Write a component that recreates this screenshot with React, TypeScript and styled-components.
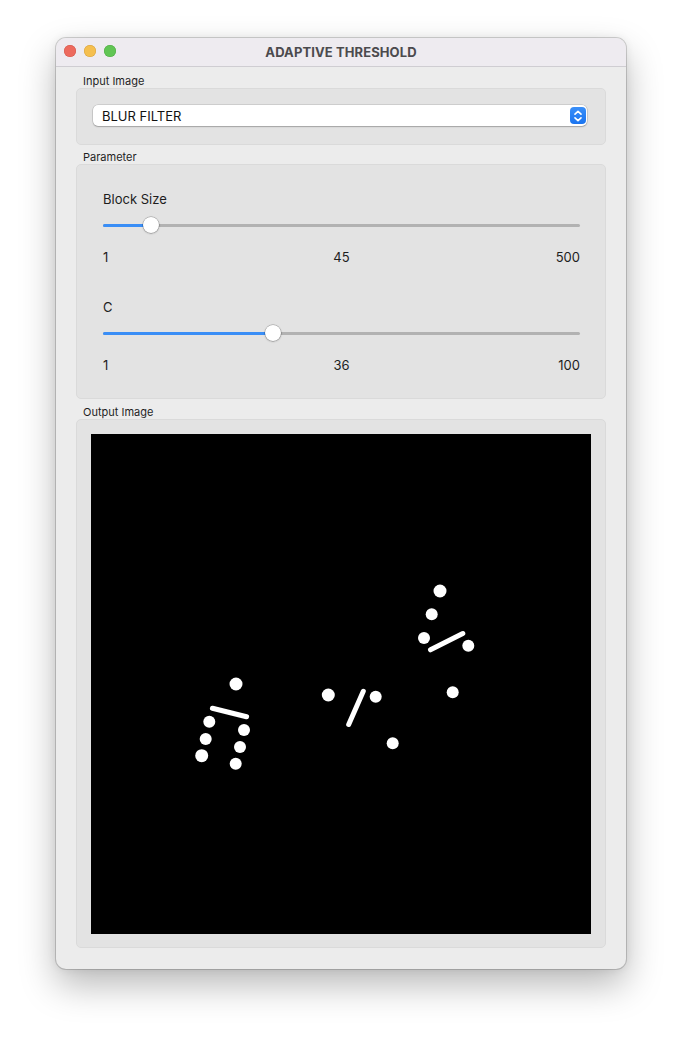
import React from 'react';
import styled, { createGlobalStyle } from 'styled-components';

const GlobalStyle = createGlobalStyle`
  html, body {
    margin: 0;
    padding: 0;
    background: #ffffff;
  }
  body {
    font-family: 'Inter', 'Helvetica Neue', 'Liberation Sans', sans-serif;
    color: #1d1d1d;
  }
`;

const Page = styled.div`
  padding: 38px 56px 75px;
`;

const Window = styled.div`
  width: 570px;
  background: #ececec;
  border-radius: 10px;
  overflow: hidden;
  box-shadow: 0 0 0 1px rgba(0, 0, 0, 0.16), 0 16px 36px rgba(0, 0, 0, 0.28), 0 0 10px rgba(0, 0, 0, 0.08);
`;

const TitleBar = styled.div`
  position: relative;
  height: 28px;
  display: flex;
  align-items: center;
  justify-content: center;
  background: #eeebf0;
  border-bottom: 1px solid #cfcdd2;
`;

const Lights = styled.div`
  position: absolute;
  left: 8px;
  top: 7px;
  display: flex;
  gap: 8px;
`;

const Light = styled.span<{ $color: string; $edge: string }>`
  width: 12px;
  height: 12px;
  border-radius: 50%;
  background: ${(p) => p.$color};
  box-shadow: inset 0 0 0 0.5px ${(p) => p.$edge};
`;

const Title = styled.div`
  font-size: 13px;
  font-weight: 700;
  color: #4b4a4d;
  letter-spacing: 0.1px;
`;

const Content = styled.div`
  padding: 8px 20px 21px;
  display: flex;
  flex-direction: column;
`;

const Section = styled.section<{ $gap?: number }>`
  display: flex;
  flex-direction: column;
  margin-top: ${(p) => p.$gap ?? 0}px;
`;

const GroupLabel = styled.div`
  font-size: 11px;
  line-height: 13px;
  padding-left: 7px;
  color: #1f1f1f;
`;

const GroupBox = styled.div<{ $pad: string }>`
  background: #e3e3e3;
  border: 1px solid #dadada;
  border-radius: 5px;
  padding: ${(p) => p.$pad};
`;

const Select = styled.div`
  height: 21px;
  background: #ffffff;
  border-radius: 5px;
  display: flex;
  align-items: center;
  justify-content: space-between;
  padding: 0 1px 0 9px;
  box-shadow: 0 0 0 0.5px rgba(0, 0, 0, 0.18), 0 1px 1.5px rgba(0, 0, 0, 0.22);
  font-size: 13px;
  color: #111;
`;

const Stepper = styled.div`
  width: 16px;
  height: 17px;
  border-radius: 4px;
  background: linear-gradient(#3a8ff8, #1a74f0);
  display: flex;
  align-items: center;
  justify-content: center;
`;

const ParamGroup = styled.div`
  display: flex;
  flex-direction: column;
  & + & {
    margin-top: 34px;
  }
`;

const ParamName = styled.div`
  font-size: 13px;
  line-height: 16px;
`;

const SliderWrap = styled.div`
  position: relative;
  height: 16px;
  margin-top: 10px;
  display: flex;
  align-items: center;
`;

const Track = styled.div`
  flex: 1;
  height: 3px;
  border-radius: 2px;
  background: #b2b2b2;
  overflow: hidden;
`;

const Fill = styled.div`
  height: 100%;
  background: #3a8ef6;
`;

const Thumb = styled.div`
  position: absolute;
  top: 0;
  width: 16px;
  height: 16px;
  margin-left: -8px;
  border-radius: 50%;
  background: #ffffff;
  box-shadow: 0 0 0 0.5px rgba(0, 0, 0, 0.28), 0 0.5px 2px rgba(0, 0, 0, 0.3);
`;

const Ticks = styled.div`
  display: grid;
  grid-template-columns: 1fr auto 1fr;
  margin-top: 16px;
  font-size: 13px;
  line-height: 16px;
  & > :nth-child(2) {
    text-align: center;
  }
  & > :nth-child(3) {
    text-align: right;
  }
`;

const Output = styled.svg`
  display: block;
`;

type Param = { name: string; min: number; max: number; value: number };

const params: Param[] = [
  { name: 'Block Size', min: 1, max: 500, value: 45 },
  { name: 'C', min: 1, max: 100, value: 36 },
];

const TRACK = 476;
const THUMB = 15;

const Slider = ({ min, max, value }: Param) => {
  const frac = (value - min) / (max - min);
  const x = THUMB / 2 + frac * (TRACK - THUMB);
  return (
    <SliderWrap>
      <Track>
        <Fill style={{ width: x }} />
      </Track>
      <Thumb style={{ left: x }} />
    </SliderWrap>
  );
};

const dots: [number, number, number][] = [
  [349, 157, 6.5],
  [340.7, 180.3, 6],
  [333, 204, 6],
  [377.3, 211.7, 6],
  [361.7, 258.3, 6],
  [284.7, 262.7, 6],
  [237.3, 261, 6.5],
  [301.7, 309.3, 6],
  [145, 250, 6.5],
  [118.3, 287.7, 6],
  [153, 296, 6],
  [114.7, 305, 6],
  [149, 313, 6],
  [110.7, 321.7, 6.5],
  [144.7, 329.7, 6],
];

const bars: [number, number, number, number][] = [
  [339.5, 215.8, 371.8, 199.5],
  [272.3, 257.3, 257.7, 290.4],
  [121.4, 274.3, 155.6, 282.7],
];

const ThresholdImage = () => (
  <Output width={500} height={500} viewBox="0 0 500 500">
    <rect width={500} height={500} fill="#000" />
    {dots.map(([cx, cy, r], i) => (
      <circle key={i} cx={cx} cy={cy} r={r} fill="#fff" />
    ))}
    {bars.map(([x1, y1, x2, y2], i) => (
      <line key={i} x1={x1} y1={y1} x2={x2} y2={y2} stroke="#fff" strokeWidth={5} strokeLinecap="round" />
    ))}
  </Output>
);

export default function App() {
  return (
    <>
      <GlobalStyle />
      <Page>
        <Window>
          <TitleBar>
            <Lights>
              <Light $color="#ed6a5e" $edge="#d2564b" />
              <Light $color="#f5bf4f" $edge="#d6a13d" />
              <Light $color="#61c554" $edge="#4ea944" />
            </Lights>
            <Title>ADAPTIVE THRESHOLD</Title>
          </TitleBar>
          <Content>
            <Section>
              <GroupLabel>Input Image</GroupLabel>
              <GroupBox $pad="16px 18px 18px 16px">
                <Select>
                  <span>BLUR FILTER</span>
                  <Stepper>
                    <svg width="8" height="12" viewBox="0 0 8 12" fill="none" stroke="#fff" strokeWidth="1.6" strokeLinecap="round" strokeLinejoin="round">
                      <path d="M1 4.2 L4 1.3 L7 4.2" />
                      <path d="M1 7.8 L4 10.7 L7 7.8" />
                    </svg>
                  </Stepper>
                </Select>
              </GroupBox>
            </Section>
            <Section $gap={6}>
              <GroupLabel>Parameter</GroupLabel>
              <GroupBox $pad="26px 25px 25px 26px">
                {params.map((p) => (
                  <ParamGroup key={p.name}>
                    <ParamName>{p.name}</ParamName>
                    <Slider {...p} />
                    <Ticks>
                      <span>{p.min}</span>
                      <span>{p.value}</span>
                      <span>{p.max}</span>
                    </Ticks>
                  </ParamGroup>
                ))}
              </GroupBox>
            </Section>
            <Section $gap={7}>
              <GroupLabel>Output Image</GroupLabel>
              <GroupBox $pad="14px 14px 13px 14px">
                <ThresholdImage />
              </GroupBox>
            </Section>
          </Content>
        </Window>
      </Page>
    </>
  );
}
